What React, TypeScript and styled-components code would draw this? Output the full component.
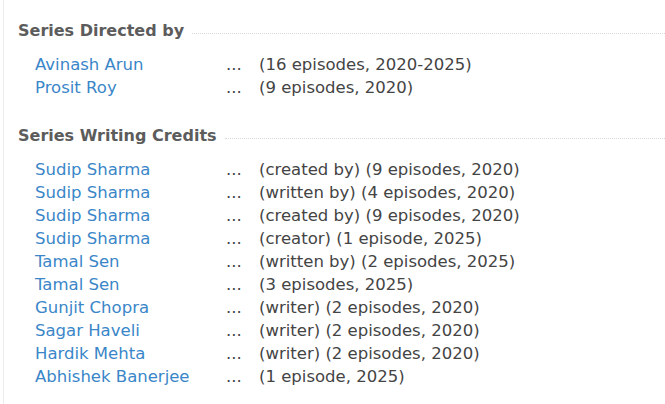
import React from "react";
import styled, { createGlobalStyle } from "styled-components";

const GlobalStyle = createGlobalStyle`
  html, body {
    margin: 0;
    padding: 0;
    background: #fff;
  }
  body {
    font-family: "DejaVu Sans", Verdana, sans-serif;
  }
`;

type Credit = { name: string; note: string };

const directors: Credit[] = [
  { name: "Avinash Arun", note: "(16 episodes, 2020-2025)" },
  { name: "Prosit Roy", note: "(9 episodes, 2020)" },
];

const writers: Credit[] = [
  { name: "Sudip Sharma", note: "(created by) (9 episodes, 2020)" },
  { name: "Sudip Sharma", note: "(written by) (4 episodes, 2020)" },
  { name: "Sudip Sharma", note: "(created by) (9 episodes, 2020)" },
  { name: "Sudip Sharma", note: "(creator) (1 episode, 2025)" },
  { name: "Tamal Sen", note: "(written by) (2 episodes, 2025)" },
  { name: "Tamal Sen", note: "(3 episodes, 2025)" },
  { name: "Gunjit Chopra", note: "(writer) (2 episodes, 2020)" },
  { name: "Sagar Haveli", note: "(writer) (2 episodes, 2020)" },
  { name: "Hardik Mehta", note: "(writer) (2 episodes, 2020)" },
  { name: "Abhishek Banerjee", note: "(1 episode, 2025)" },
];

const Section = ({ title, rows }: { title: string; rows: Credit[] }) => (
  <Block>
    <Heading>
      <span>{title}</span>
      <Rule />
    </Heading>
    <CreditTable>
      {rows.map((r, i) => (
        <Row key={i}>
          <Name href="#">{r.name}</Name>
          <Dots>...</Dots>
          <Note>{r.note}</Note>
        </Row>
      ))}
    </CreditTable>
  </Block>
);

export default function App() {
  return (
    <>
      <GlobalStyle />
      <Page>
        <Section title="Series Directed by" rows={directors} />
        <Section title="Series Writing Credits" rows={writers} />
      </Page>
    </>
  );
}

const Page = styled.div`
  margin-left: 3px;
  min-height: 404px;
  box-sizing: border-box;
  border-left: 1px solid #ececec;
  padding: 19px 0 0 14px;
`;

const Block = styled.section`
  margin-bottom: 25px;
`;

const Heading = styled.h4`
  display: flex;
  align-items: center;
  gap: 8px;
  margin: 0 0 10px;
  font-size: 16px;
  line-height: 24px;
  font-weight: bold;
  color: #5c5c5c;
  white-space: nowrap;
`;

const Rule = styled.div`
  flex: 1;
  margin-top: 4px;
  border-top: 1px dotted #dadada;
`;

const CreditTable = styled.div`
  display: flex;
  flex-direction: column;
  padding-left: 17px;
`;

const Row = styled.div`
  display: grid;
  grid-template-columns: 191px 33px auto;
  font-size: 16.5px;
  line-height: 23px;
  color: #444;
`;

const Name = styled.a`
  color: #3a86c8;
  text-decoration: none;
  white-space: nowrap;
`;

const Dots = styled.span`
  color: #444;
`;

const Note = styled.span`
  white-space: nowrap;
`;
